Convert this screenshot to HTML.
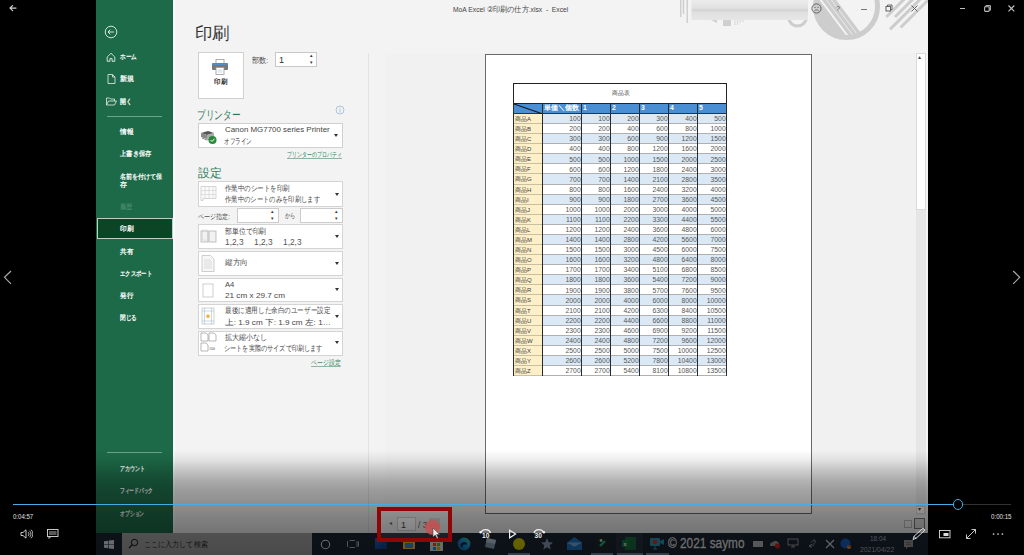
<!DOCTYPE html><html><head><meta charset="utf-8"><style>
*{margin:0;padding:0;box-sizing:border-box}
html,body{width:1024px;height:555px;overflow:hidden;background:#000}
body{position:relative;font-family:"Liberation Sans",sans-serif;color:#444}
.abs{position:absolute}
.t{position:absolute;white-space:nowrap;line-height:1}
.box{position:absolute;background:#fff;border:1px solid #d4d4d4}
.dd{position:absolute;width:0;height:0;border-left:2.5px solid transparent;border-right:2.5px solid transparent;border-top:3px solid #333}
.sp{position:absolute;font-size:5px;line-height:1;color:#333}
</style></head><body>
<div class="abs" style="left:96px;top:0;width:832px;height:533px;background:#f3f3f3"></div>
<div class="abs" style="left:385px;top:53px;width:531px;height:480px;background:#f1f1f1"></div>
<div class="abs" style="left:368px;top:53px;width:1px;height:480px;background:#e2e2e2"></div>
<div class="abs" style="left:96px;top:0;width:77px;height:533px;background:#1d6a48"></div>
<div class="abs" style="left:173px;top:0;width:1.5px;height:533px;background:#f9fbfb"></div>
<svg class="abs" style="left:104px;top:25px" width="14" height="14" viewBox="0 0 14 14"><circle cx="7" cy="7" r="5.8" fill="none" stroke="#e8efe9" stroke-width="0.9"/><path d="M4 7h6M6.3 4.7L4 7l2.3 2.3" fill="none" stroke="#e8efe9" stroke-width="0.9"/></svg>
<svg class="abs" style="left:106px;top:52px" width="10" height="10" viewBox="0 0 10 10"><path d="M1.2 5L5 1.3 8.8 5V9.3H6.1V6.6H3.9V9.3H1.2z" fill="none" stroke="#eef3ef" stroke-width="0.85" stroke-linejoin="round"/></svg>
<svg class="abs" style="left:107px;top:74px" width="9" height="10" viewBox="0 0 9 10"><path d="M1 .5h4.5L8 3v6.5H1z M5.5 .5V3H8" fill="none" stroke="#e8efe9" stroke-width="0.8"/></svg>
<svg class="abs" style="left:106px;top:97px" width="11" height="9" viewBox="0 0 11 9"><path d="M.5 8V1h3l1 1h4v2 M.5 8l2-4H10.5l-2 4z" fill="none" stroke="#e8efe9" stroke-width="0.8"/></svg>
<div class="abs" style="left:107px;top:116px;width:55px;height:1px;background:#6da587"></div>
<div class="abs" style="left:97px;top:218px;width:76px;height:21px;background:#0c4526;border:1px solid #b9d2c3"></div>
<div class="abs" style="left:107px;top:452px;width:55px;height:1px;background:#6da587"></div>
<div class="t" id="sb_home" style="left:119.6px;top:53.1px;font-size:7px;color:#ffffff;transform:scaleX(0.805);transform-origin:0 0;-webkit-text-stroke:0.25px #fff">ホーム</div>
<div class="t" id="sb_new" style="left:119.6px;top:75.2px;font-size:7px;color:#ffffff;-webkit-text-stroke:0.25px #fff">新規</div>
<div class="t" id="sb_open" style="left:119.6px;top:97.8px;font-size:7px;color:#ffffff;transform:scaleX(0.858);transform-origin:0 0;-webkit-text-stroke:0.25px #fff">開く</div>
<div class="t" id="sb_info" style="left:119.6px;top:128.4px;font-size:7px;color:#ffffff;transform:scaleX(0.957);transform-origin:0 0;-webkit-text-stroke:0.25px #fff">情報</div>
<div class="t" id="sb_save" style="left:120.0px;top:150.2px;font-size:7px;color:#ffffff;transform:scaleX(0.903);transform-origin:0 0;-webkit-text-stroke:0.25px #fff">上書き保存</div>
<div class="t" id="sb_saveas1" style="left:120.0px;top:172.5px;font-size:7px;color:#ffffff;transform:scaleX(0.863);transform-origin:0 0;-webkit-text-stroke:0.25px #fff">名前を付けて保</div>
<div class="t" id="sb_saveas2" style="left:120.0px;top:181.0px;font-size:7px;color:#ffffff;-webkit-text-stroke:0.25px #fff">存</div>
<div class="t" id="sb_hist" style="left:120.0px;top:202.6px;font-size:7px;color:#5e9779;transform:scaleX(0.893);transform-origin:0 0;">履歴</div>
<div class="t" id="sb_print" style="left:119.8px;top:225.3px;font-size:7px;color:#ffffff;transform:scaleX(0.957);transform-origin:0 0;-webkit-text-stroke:0.25px #fff">印刷</div>
<div class="t" id="sb_share" style="left:119.8px;top:247.5px;font-size:7px;color:#ffffff;transform:scaleX(0.929);transform-origin:0 0;-webkit-text-stroke:0.25px #fff">共有</div>
<div class="t" id="sb_export" style="left:119.8px;top:269.5px;font-size:7px;color:#ffffff;transform:scaleX(0.763);transform-origin:0 0;-webkit-text-stroke:0.25px #fff">エクスポート</div>
<div class="t" id="sb_publish" style="left:119.8px;top:291.5px;font-size:7px;color:#ffffff;transform:scaleX(0.929);transform-origin:0 0;-webkit-text-stroke:0.25px #fff">発行</div>
<div class="t" id="sb_close" style="left:119.8px;top:313.5px;font-size:7px;color:#ffffff;transform:scaleX(0.8);transform-origin:0 0;-webkit-text-stroke:0.25px #fff">閉じる</div>
<div class="t" id="sb_account" style="left:120.0px;top:464.8px;font-size:7px;color:#ffffff;transform:scaleX(0.715);transform-origin:0 0;-webkit-text-stroke:0.25px #fff">アカウント</div>
<div class="t" id="sb_feedback" style="left:120.0px;top:487.0px;font-size:7px;color:#ffffff;transform:scaleX(0.675);transform-origin:0 0;-webkit-text-stroke:0.25px #fff">フィードバック</div>
<div class="t" id="sb_options" style="left:120.0px;top:509.5px;font-size:7px;color:#ffffff;transform:scaleX(0.694);transform-origin:0 0;-webkit-text-stroke:0.25px #fff">オプション</div>
<div class="t" id="title" style="left:453.4px;top:6.0px;font-size:7.5px;color:#444;transform:scaleX(0.896);transform-origin:0 0;">MoA Excel ②印刷の仕方.xlsx&nbsp; - &nbsp;Excel</div>
<svg class="abs" style="left:676px;top:0" width="252" height="45" viewBox="676 0 252 45">
<defs><linearGradient id="bar" x1="0" y1="0" x2="0" y2="1"><stop offset="0" stop-color="#ececec"/><stop offset="0.4" stop-color="#e2e2e2"/><stop offset="0.5" stop-color="#d2d2d2"/><stop offset="0.62" stop-color="#e0e0e0"/><stop offset="1" stop-color="#e6e6e6"/></linearGradient>
<clipPath id="cl"><rect x="676" y="0" width="252" height="45"/></clipPath>
<clipPath id="inner"><circle cx="846.5" cy="6.5" r="29"/></clipPath></defs>
<g clip-path="url(#cl)" fill="none" stroke="#cdcdcd">
<path d="M680.8 0v17M683.5 0v14M687.2 0v23" stroke-width="1.4"/>
<circle cx="797.5" cy="17" r="9" stroke-width="3"/>
<circle cx="846.5" cy="6.5" r="31" stroke-width="5"/>
<g clip-path="url(#inner)" stroke-width="3.4"><path d="M821 -4l30 40M826 -4l30 40M831 -4l30 40"/><path d="M816.5 -4l30 40H790V-4z" fill="#cdcdcd" stroke="none"/></g>
<path d="M886.3 17l20-20M895 17l20-20M890 29.4l40-40M900.6 27.5l32-32" stroke-width="3"/>
</g>
<rect x="691.5" y="0" width="116.5" height="20" fill="url(#bar)"/>
<path d="M711 20l6 3v-3z" fill="#cfcfcf"/><rect x="723" y="20" width="8" height="6" fill="#cfcfcf"/>
<path d="M735 20v5M737.5 20v5M740 20v3M743 20v2" stroke="#cfcfcf" stroke-width="0.8"/>
</svg>
<svg class="abs" style="left:811px;top:3px" width="11" height="11" viewBox="0 0 11 11"><circle cx="5.5" cy="5.5" r="4.6" fill="none" stroke="#555" stroke-width="0.9"/><circle cx="4" cy="4.3" r="0.6" fill="#555"/><circle cx="7" cy="4.3" r="0.6" fill="#555"/><path d="M3.3 8c1.2-1.5 3.2-1.5 4.4 0" fill="none" stroke="#555" stroke-width="0.8"/></svg>
<div class="t" style="left:836px;top:5px;font-size:7px;color:#555">?</div>
<div class="abs" style="left:861px;top:8.5px;width:6px;height:0.8px;background:#777"></div>
<svg class="abs" style="left:885px;top:4px" width="8" height="8" viewBox="0 0 8 8"><rect x="1" y="2.5" width="4.5" height="4.5" fill="none" stroke="#555" stroke-width="0.9"/><path d="M2.5 2.5V1H7v4.5H5.5" fill="none" stroke="#555" stroke-width="0.9"/></svg>
<svg class="abs" style="left:911px;top:5px" width="7" height="7" viewBox="0 0 7 7"><path d="M.5 .5l6 6M6.5 .5l-6 6" stroke="#555" stroke-width="0.9"/></svg>
<div class="t" id="h_print" style="left:195.47px;top:24.9px;font-size:17px;color:#333;transform:scaleX(1.028);transform-origin:0 0;">印刷</div>
<div class="box" style="left:198px;top:52px;width:46px;height:47px;border-color:#d0d0d0"></div>
<svg class="abs" style="left:211px;top:59px" width="18" height="16" viewBox="0 0 18 16"><rect x="5" y="0.5" width="8" height="4" fill="#fff" stroke="#999" stroke-width="0.8"/><rect x="1" y="4" width="16" height="7" rx="1" fill="#777"/><rect x="2" y="4.5" width="14" height="1.5" fill="#4f8fce"/><rect x="5" y="8.5" width="8" height="7" fill="#fff" stroke="#999" stroke-width="0.8"/><path d="M6.5 11h5M6.5 13h5" stroke="#bbb" stroke-width="0.6"/></svg>
<div class="t" id="btn_print" style="left:214.0px;top:78.1px;font-size:7px;color:#333;transform:scaleX(0.929);transform-origin:0 0;font-weight:bold">印刷</div>
<div class="t" id="copies" style="left:252.4px;top:57.2px;font-size:7.5px;color:#484848;transform:scaleX(0.894);transform-origin:0 0;">部数:</div>
<div class="box" style="left:275px;top:52px;width:42px;height:15px;border-color:#c8c8c8"></div>
<div class="t" id="copies_v" style="left:279.0px;top:55.8px;font-size:9px;color:#333;">1</div>
<div class="sp" style="left:310px;top:53px">▴</div><div class="sp" style="left:310px;top:60px">▾</div>
<div class="t" id="h_printer" style="left:197.08px;top:108.5px;font-size:12px;color:#2f7a58;transform:scaleX(0.722);transform-origin:0 0;">プリンター</div>
<svg class="abs" style="left:335px;top:105px" width="10" height="10" viewBox="0 0 10 10"><circle cx="5" cy="5" r="4" fill="none" stroke="#9cb8d8" stroke-width="0.8"/><path d="M5 4v3.5M5 2.6v.8" stroke="#9cb8d8" stroke-width="0.8"/></svg>
<div class="box" style="left:198px;top:123px;width:145px;height:25px;border-color:#d0d0d0"></div>
<svg class="abs" style="left:199px;top:129px" width="20" height="16" viewBox="0 0 20 16"><path d="M2 4l7-2 6 2-7 2z" fill="#555"/><path d="M2 4v4l6 2V6z" fill="#888"/><path d="M8 6l7-2v4l-7 2z" fill="#aaa"/><path d="M3 9l5 2 5-1.5" stroke="#666" stroke-width="0.8" fill="none"/><circle cx="13.5" cy="11" r="4" fill="#2a8a3a"/><path d="M11.5 11l1.5 1.5 2.6-2.8" stroke="#fff" stroke-width="1" fill="none"/></svg>
<div class="t" id="prn_name" style="left:224.7px;top:126.2px;font-size:8px;color:#444;transform:scaleX(0.989);transform-origin:0 0;">Canon MG7700 series Printer</div>
<div class="t" id="prn_status" style="left:224.01px;top:137.9px;font-size:7.5px;color:#444;transform:scaleX(0.692);transform-origin:0 0;">オフライン</div>
<div class="dd" style="left:334px;top:134px"></div>
<div class="t" id="prn_prop" style="left:286.99px;top:152.0px;font-size:6.5px;color:#3d7a60;transform:scaleX(0.713);transform-origin:0 0;text-decoration:underline;text-decoration-color:#8fb3a0">プリンターのプロパティ</div>
<div class="t" id="h_settings" style="left:198.0px;top:167.0px;font-size:12px;color:#2f7a58;">設定</div>
<div class="box" style="left:198px;top:181px;width:145px;height:26px;border-color:#d4d4d4"></div>
<svg class="abs" style="left:200px;top:186px" width="17" height="15" viewBox="0 0 17 15"><path d="M1 .5h15v12H3v2H1z" fill="#fafafa" stroke="#c4c4c4" stroke-width="0.7"/><path d="M1 4.5h15M1 8.5h15M5 .5v12M9 .5v12M13 .5v12" stroke="#d0d0d0" stroke-width="0.6"/></svg>
<div class="t" id="s1a" style="left:224.8px;top:184.9px;font-size:7.5px;color:#484848;transform:scaleX(0.811);transform-origin:0 0;">作業中のシートを印刷</div>
<div class="t" id="s1b" style="left:224.8px;top:196.2px;font-size:7.5px;color:#484848;transform:scaleX(0.791);transform-origin:0 0;">作業中のシートのみを印刷します</div>
<div class="dd" style="left:334.5px;top:192.5px"></div>
<div class="t" id="pages" style="left:197.8px;top:212.5px;font-size:7px;color:#4a4a4a;transform:scaleX(0.862);transform-origin:0 0;">ページ指定:</div>
<div class="box" style="left:237px;top:208px;width:42px;height:15px;border-color:#ccc"></div>
<div class="sp" style="left:271px;top:209px">▴</div><div class="sp" style="left:271px;top:216px">▾</div>
<div class="t" id="kara" style="left:284.8px;top:212.0px;font-size:7px;color:#4a4a4a;transform:scaleX(0.746);transform-origin:0 0;">から</div>
<div class="box" style="left:300px;top:208px;width:43px;height:15px;border-color:#ccc"></div>
<div class="sp" style="left:335px;top:209px">▴</div><div class="sp" style="left:335px;top:216px">▾</div>
<div class="box" style="left:198px;top:224px;width:145px;height:25px;border-color:#d4d4d4"></div>
<svg class="abs" style="left:200px;top:229px" width="17" height="14" viewBox="0 0 17 14"><rect x="1" y="2" width="7" height="11" fill="#f2f2f2" stroke="#aaa" stroke-width="0.7"/><rect x="9" y="2" width="7" height="11" fill="#f2f2f2" stroke="#aaa" stroke-width="0.7"/><rect x="2.5" y="1" width="5" height="10" fill="none" stroke="#ccc" stroke-width="0.5"/></svg>
<div class="t" id="s2a" style="left:224.8px;top:227.8px;font-size:7.5px;color:#484848;transform:scaleX(0.862);transform-origin:0 0;">部単位で印刷</div>
<div class="t" id="s2b1" style="left:224.8px;top:238.2px;font-size:8.5px;color:#555;transform:scaleX(0.979);transform-origin:0 0;font-family:"Liberation Serif",serif">1,2,3</div>
<div class="t" id="s2b2" style="left:254.0px;top:238.2px;font-size:8.5px;color:#555;transform:scaleX(0.979);transform-origin:0 0;font-family:"Liberation Serif",serif">1,2,3</div>
<div class="t" id="s2b3" style="left:282.7px;top:238.2px;font-size:8.5px;color:#555;transform:scaleX(0.979);transform-origin:0 0;font-family:"Liberation Serif",serif">1,2,3</div>
<div class="dd" style="left:334.5px;top:235.0px"></div>
<div class="box" style="left:198px;top:251px;width:145px;height:25px;border-color:#d4d4d4"></div>
<svg class="abs" style="left:201px;top:255px" width="14" height="17" viewBox="0 0 14 17"><path d="M1 .5h8.5L13 4v12.5H1z" fill="#f6f6f6" stroke="#bbb" stroke-width="0.7"/><path d="M3 5h7M3 7h8M3 9h8M3 11h8M3 13h8" stroke="#ccc" stroke-width="0.6"/></svg>
<div class="t" id="s3" style="left:224.7px;top:258.9px;font-size:7.5px;color:#484848;transform:scaleX(0.957);transform-origin:0 0;">縦方向</div>
<div class="dd" style="left:334.5px;top:262.0px"></div>
<div class="box" style="left:198px;top:278px;width:145px;height:24px;border-color:#d4d4d4"></div>
<svg class="abs" style="left:202px;top:283px" width="12" height="15" viewBox="0 0 12 15"><rect x="1" y="1" width="10" height="13" fill="#fff" stroke="#bbb" stroke-width="0.7"/></svg>
<div class="t" id="s4a" style="left:225.1px;top:280.9px;font-size:7.5px;color:#484848;transform:scaleX(1.011);transform-origin:0 0;">A4</div>
<div class="t" id="s4b" style="left:225.1px;top:292.4px;font-size:7.5px;color:#484848;transform:scaleX(1.091);transform-origin:0 0;">21 cm x 29.7 cm</div>
<div class="dd" style="left:334.5px;top:288.0px"></div>
<div class="box" style="left:198px;top:304px;width:145px;height:25px;border-color:#d4d4d4"></div>
<svg class="abs" style="left:201px;top:307px" width="14" height="18" viewBox="0 0 14 18"><rect x="1" y="1" width="12" height="16" fill="#fff" stroke="#bbb" stroke-width="0.7"/><path d="M3.5 1v16M10.5 1v16M1 4h12M1 14h12" stroke="#9cc0dc" stroke-width="0.6"/><path d="M7 6.5l.8 1.7 1.8.2-1.3 1.2.4 1.8L7 10.5l-1.7.9.4-1.8-1.3-1.2 1.8-.2z" fill="#f0b040"/></svg>
<div class="t" id="s5a" style="left:225.1px;top:307.4px;font-size:7.5px;color:#484848;transform:scaleX(0.823);transform-origin:0 0;">最後に適用した余白のユーザー設定</div>
<div class="t" id="s5b" style="left:225.1px;top:318.7px;font-size:7.5px;color:#484848;transform:scaleX(1.087);transform-origin:0 0;">上: 1.9 cm 下: 1.9 cm 左: 1…</div>
<div class="dd" style="left:334.5px;top:314.5px"></div>
<div class="box" style="left:198px;top:331px;width:145px;height:25px;border-color:#d4d4d4"></div>
<svg class="abs" style="left:200px;top:332px" width="18" height="20" viewBox="0 0 18 20"><path d="M1 1h5l2 2v6H1z M9 1h5l2 2v6H9z M1 11h5l2 2v6H1z" fill="#fff" stroke="#999" stroke-width="0.7"/><text x="9" y="18" font-size="4" fill="#555" font-family="Liberation Serif">100</text></svg>
<div class="t" id="s6a" style="left:225.1px;top:333.5px;font-size:7.5px;color:#484848;transform:scaleX(0.87);transform-origin:0 0;">拡大縮小なし</div>
<div class="t" id="s6b" style="left:224.33px;top:345.0px;font-size:7.5px;color:#484848;transform:scaleX(0.769);transform-origin:0 0;">シートを実際のサイズで印刷します</div>
<div class="dd" style="left:334.5px;top:341.0px"></div>
<div class="t" id="pagesetup" style="left:311.3px;top:359.5px;font-size:6.5px;color:#3d7a60;transform:scaleX(0.849);transform-origin:0 0;text-decoration:underline;text-decoration-color:#8fb3a0">ページ設定</div>
<div class="abs" style="left:485px;top:54px;width:327px;height:460px;background:#fff;border:1px solid #6a6a6a"></div>
<div class="abs" style="left:512.8px;top:82.8px;width:214.4px;height:20px;background:#fff;border:1.3px solid #222;border-bottom:none"></div>
<div class="t" id="tbl_title" style="left:612.0px;top:90.2px;font-size:6px;color:#444;transform:scaleX(0.972);transform-origin:0 0;">商品表</div>
<div class="abs" style="left:513.5px;top:103px;width:213.0px;height:11px;background:#4a8fd3;border-top:1.3px solid #222;border-bottom:1px solid #333"></div>
<svg class="abs" style="left:513.5px;top:103px" width="29" height="11"><path d="M0 1L29 11" stroke="#111" stroke-width="1.1"/></svg>
<div class="t" style="left:544.0px;top:105.3px;font-size:6.8px;color:#fff;font-weight:bold">単価＼個数</div>
<div class="t" style="left:583.0px;top:105.3px;font-size:6.8px;color:#fff;font-weight:bold">1</div>
<div class="t" style="left:612.0px;top:105.3px;font-size:6.8px;color:#fff;font-weight:bold">2</div>
<div class="t" style="left:641.0px;top:105.3px;font-size:6.8px;color:#fff;font-weight:bold">3</div>
<div class="t" style="left:670.0px;top:105.3px;font-size:6.8px;color:#fff;font-weight:bold">4</div>
<div class="t" style="left:699.0px;top:105.3px;font-size:6.8px;color:#fff;font-weight:bold">5</div>
<div class="abs" style="left:513.5px;top:114.00px;width:29px;height:10.08px;background:#fdf0c8;border-bottom:1px solid #c9c0a0"></div>
<div class="abs" style="left:542.5px;top:114.00px;width:184px;height:10.08px;background:#dbe9f6;border-bottom:1px solid #b0b0b0"></div>
<div class="t" style="left:515px;top:116.00px;font-size:6px;color:#3a3a3a">商品A</div>
<div class="t" style="left:542.5px;width:38.2px;text-align:right;top:116.20px;font-size:6.8px;color:#555">100</div>
<div class="t" style="left:581.5px;width:28.2px;text-align:right;top:116.20px;font-size:6.8px;color:#555">100</div>
<div class="t" style="left:610.5px;width:28.2px;text-align:right;top:116.20px;font-size:6.8px;color:#555">200</div>
<div class="t" style="left:639.5px;width:28.2px;text-align:right;top:116.20px;font-size:6.8px;color:#555">300</div>
<div class="t" style="left:668.5px;width:28.2px;text-align:right;top:116.20px;font-size:6.8px;color:#555">400</div>
<div class="t" style="left:697.5px;width:28.2px;text-align:right;top:116.20px;font-size:6.8px;color:#555">500</div>
<div class="abs" style="left:513.5px;top:124.08px;width:29px;height:10.08px;background:#fdf0c8;border-bottom:1px solid #c9c0a0"></div>
<div class="abs" style="left:542.5px;top:124.08px;width:184px;height:10.08px;background:#ffffff;border-bottom:1px solid #b0b0b0"></div>
<div class="t" style="left:515px;top:126.08px;font-size:6px;color:#3a3a3a">商品B</div>
<div class="t" style="left:542.5px;width:38.2px;text-align:right;top:126.28px;font-size:6.8px;color:#555">200</div>
<div class="t" style="left:581.5px;width:28.2px;text-align:right;top:126.28px;font-size:6.8px;color:#555">200</div>
<div class="t" style="left:610.5px;width:28.2px;text-align:right;top:126.28px;font-size:6.8px;color:#555">400</div>
<div class="t" style="left:639.5px;width:28.2px;text-align:right;top:126.28px;font-size:6.8px;color:#555">600</div>
<div class="t" style="left:668.5px;width:28.2px;text-align:right;top:126.28px;font-size:6.8px;color:#555">800</div>
<div class="t" style="left:697.5px;width:28.2px;text-align:right;top:126.28px;font-size:6.8px;color:#555">1000</div>
<div class="abs" style="left:513.5px;top:134.16px;width:29px;height:10.08px;background:#fdf0c8;border-bottom:1px solid #c9c0a0"></div>
<div class="abs" style="left:542.5px;top:134.16px;width:184px;height:10.08px;background:#dbe9f6;border-bottom:1px solid #b0b0b0"></div>
<div class="t" style="left:515px;top:136.16px;font-size:6px;color:#3a3a3a">商品C</div>
<div class="t" style="left:542.5px;width:38.2px;text-align:right;top:136.36px;font-size:6.8px;color:#555">300</div>
<div class="t" style="left:581.5px;width:28.2px;text-align:right;top:136.36px;font-size:6.8px;color:#555">300</div>
<div class="t" style="left:610.5px;width:28.2px;text-align:right;top:136.36px;font-size:6.8px;color:#555">600</div>
<div class="t" style="left:639.5px;width:28.2px;text-align:right;top:136.36px;font-size:6.8px;color:#555">900</div>
<div class="t" style="left:668.5px;width:28.2px;text-align:right;top:136.36px;font-size:6.8px;color:#555">1200</div>
<div class="t" style="left:697.5px;width:28.2px;text-align:right;top:136.36px;font-size:6.8px;color:#555">1500</div>
<div class="abs" style="left:513.5px;top:144.24px;width:29px;height:10.08px;background:#fdf0c8;border-bottom:1px solid #c9c0a0"></div>
<div class="abs" style="left:542.5px;top:144.24px;width:184px;height:10.08px;background:#ffffff;border-bottom:1px solid #b0b0b0"></div>
<div class="t" style="left:515px;top:146.24px;font-size:6px;color:#3a3a3a">商品D</div>
<div class="t" style="left:542.5px;width:38.2px;text-align:right;top:146.44px;font-size:6.8px;color:#555">400</div>
<div class="t" style="left:581.5px;width:28.2px;text-align:right;top:146.44px;font-size:6.8px;color:#555">400</div>
<div class="t" style="left:610.5px;width:28.2px;text-align:right;top:146.44px;font-size:6.8px;color:#555">800</div>
<div class="t" style="left:639.5px;width:28.2px;text-align:right;top:146.44px;font-size:6.8px;color:#555">1200</div>
<div class="t" style="left:668.5px;width:28.2px;text-align:right;top:146.44px;font-size:6.8px;color:#555">1600</div>
<div class="t" style="left:697.5px;width:28.2px;text-align:right;top:146.44px;font-size:6.8px;color:#555">2000</div>
<div class="abs" style="left:513.5px;top:154.32px;width:29px;height:10.08px;background:#fdf0c8;border-bottom:1px solid #c9c0a0"></div>
<div class="abs" style="left:542.5px;top:154.32px;width:184px;height:10.08px;background:#dbe9f6;border-bottom:1px solid #b0b0b0"></div>
<div class="t" style="left:515px;top:156.32px;font-size:6px;color:#3a3a3a">商品E</div>
<div class="t" style="left:542.5px;width:38.2px;text-align:right;top:156.52px;font-size:6.8px;color:#555">500</div>
<div class="t" style="left:581.5px;width:28.2px;text-align:right;top:156.52px;font-size:6.8px;color:#555">500</div>
<div class="t" style="left:610.5px;width:28.2px;text-align:right;top:156.52px;font-size:6.8px;color:#555">1000</div>
<div class="t" style="left:639.5px;width:28.2px;text-align:right;top:156.52px;font-size:6.8px;color:#555">1500</div>
<div class="t" style="left:668.5px;width:28.2px;text-align:right;top:156.52px;font-size:6.8px;color:#555">2000</div>
<div class="t" style="left:697.5px;width:28.2px;text-align:right;top:156.52px;font-size:6.8px;color:#555">2500</div>
<div class="abs" style="left:513.5px;top:164.40px;width:29px;height:10.08px;background:#fdf0c8;border-bottom:1px solid #c9c0a0"></div>
<div class="abs" style="left:542.5px;top:164.40px;width:184px;height:10.08px;background:#ffffff;border-bottom:1px solid #b0b0b0"></div>
<div class="t" style="left:515px;top:166.40px;font-size:6px;color:#3a3a3a">商品F</div>
<div class="t" style="left:542.5px;width:38.2px;text-align:right;top:166.60px;font-size:6.8px;color:#555">600</div>
<div class="t" style="left:581.5px;width:28.2px;text-align:right;top:166.60px;font-size:6.8px;color:#555">600</div>
<div class="t" style="left:610.5px;width:28.2px;text-align:right;top:166.60px;font-size:6.8px;color:#555">1200</div>
<div class="t" style="left:639.5px;width:28.2px;text-align:right;top:166.60px;font-size:6.8px;color:#555">1800</div>
<div class="t" style="left:668.5px;width:28.2px;text-align:right;top:166.60px;font-size:6.8px;color:#555">2400</div>
<div class="t" style="left:697.5px;width:28.2px;text-align:right;top:166.60px;font-size:6.8px;color:#555">3000</div>
<div class="abs" style="left:513.5px;top:174.48px;width:29px;height:10.08px;background:#fdf0c8;border-bottom:1px solid #c9c0a0"></div>
<div class="abs" style="left:542.5px;top:174.48px;width:184px;height:10.08px;background:#dbe9f6;border-bottom:1px solid #b0b0b0"></div>
<div class="t" style="left:515px;top:176.48px;font-size:6px;color:#3a3a3a">商品G</div>
<div class="t" style="left:542.5px;width:38.2px;text-align:right;top:176.68px;font-size:6.8px;color:#555">700</div>
<div class="t" style="left:581.5px;width:28.2px;text-align:right;top:176.68px;font-size:6.8px;color:#555">700</div>
<div class="t" style="left:610.5px;width:28.2px;text-align:right;top:176.68px;font-size:6.8px;color:#555">1400</div>
<div class="t" style="left:639.5px;width:28.2px;text-align:right;top:176.68px;font-size:6.8px;color:#555">2100</div>
<div class="t" style="left:668.5px;width:28.2px;text-align:right;top:176.68px;font-size:6.8px;color:#555">2800</div>
<div class="t" style="left:697.5px;width:28.2px;text-align:right;top:176.68px;font-size:6.8px;color:#555">3500</div>
<div class="abs" style="left:513.5px;top:184.56px;width:29px;height:10.08px;background:#fdf0c8;border-bottom:1px solid #c9c0a0"></div>
<div class="abs" style="left:542.5px;top:184.56px;width:184px;height:10.08px;background:#ffffff;border-bottom:1px solid #b0b0b0"></div>
<div class="t" style="left:515px;top:186.56px;font-size:6px;color:#3a3a3a">商品H</div>
<div class="t" style="left:542.5px;width:38.2px;text-align:right;top:186.76px;font-size:6.8px;color:#555">800</div>
<div class="t" style="left:581.5px;width:28.2px;text-align:right;top:186.76px;font-size:6.8px;color:#555">800</div>
<div class="t" style="left:610.5px;width:28.2px;text-align:right;top:186.76px;font-size:6.8px;color:#555">1600</div>
<div class="t" style="left:639.5px;width:28.2px;text-align:right;top:186.76px;font-size:6.8px;color:#555">2400</div>
<div class="t" style="left:668.5px;width:28.2px;text-align:right;top:186.76px;font-size:6.8px;color:#555">3200</div>
<div class="t" style="left:697.5px;width:28.2px;text-align:right;top:186.76px;font-size:6.8px;color:#555">4000</div>
<div class="abs" style="left:513.5px;top:194.64px;width:29px;height:10.08px;background:#fdf0c8;border-bottom:1px solid #c9c0a0"></div>
<div class="abs" style="left:542.5px;top:194.64px;width:184px;height:10.08px;background:#dbe9f6;border-bottom:1px solid #b0b0b0"></div>
<div class="t" style="left:515px;top:196.64px;font-size:6px;color:#3a3a3a">商品I</div>
<div class="t" style="left:542.5px;width:38.2px;text-align:right;top:196.84px;font-size:6.8px;color:#555">900</div>
<div class="t" style="left:581.5px;width:28.2px;text-align:right;top:196.84px;font-size:6.8px;color:#555">900</div>
<div class="t" style="left:610.5px;width:28.2px;text-align:right;top:196.84px;font-size:6.8px;color:#555">1800</div>
<div class="t" style="left:639.5px;width:28.2px;text-align:right;top:196.84px;font-size:6.8px;color:#555">2700</div>
<div class="t" style="left:668.5px;width:28.2px;text-align:right;top:196.84px;font-size:6.8px;color:#555">3600</div>
<div class="t" style="left:697.5px;width:28.2px;text-align:right;top:196.84px;font-size:6.8px;color:#555">4500</div>
<div class="abs" style="left:513.5px;top:204.72px;width:29px;height:10.08px;background:#fdf0c8;border-bottom:1px solid #c9c0a0"></div>
<div class="abs" style="left:542.5px;top:204.72px;width:184px;height:10.08px;background:#ffffff;border-bottom:1px solid #b0b0b0"></div>
<div class="t" style="left:515px;top:206.72px;font-size:6px;color:#3a3a3a">商品J</div>
<div class="t" style="left:542.5px;width:38.2px;text-align:right;top:206.92px;font-size:6.8px;color:#555">1000</div>
<div class="t" style="left:581.5px;width:28.2px;text-align:right;top:206.92px;font-size:6.8px;color:#555">1000</div>
<div class="t" style="left:610.5px;width:28.2px;text-align:right;top:206.92px;font-size:6.8px;color:#555">2000</div>
<div class="t" style="left:639.5px;width:28.2px;text-align:right;top:206.92px;font-size:6.8px;color:#555">3000</div>
<div class="t" style="left:668.5px;width:28.2px;text-align:right;top:206.92px;font-size:6.8px;color:#555">4000</div>
<div class="t" style="left:697.5px;width:28.2px;text-align:right;top:206.92px;font-size:6.8px;color:#555">5000</div>
<div class="abs" style="left:513.5px;top:214.80px;width:29px;height:10.08px;background:#fdf0c8;border-bottom:1px solid #c9c0a0"></div>
<div class="abs" style="left:542.5px;top:214.80px;width:184px;height:10.08px;background:#dbe9f6;border-bottom:1px solid #b0b0b0"></div>
<div class="t" style="left:515px;top:216.80px;font-size:6px;color:#3a3a3a">商品K</div>
<div class="t" style="left:542.5px;width:38.2px;text-align:right;top:217.00px;font-size:6.8px;color:#555">1100</div>
<div class="t" style="left:581.5px;width:28.2px;text-align:right;top:217.00px;font-size:6.8px;color:#555">1100</div>
<div class="t" style="left:610.5px;width:28.2px;text-align:right;top:217.00px;font-size:6.8px;color:#555">2200</div>
<div class="t" style="left:639.5px;width:28.2px;text-align:right;top:217.00px;font-size:6.8px;color:#555">3300</div>
<div class="t" style="left:668.5px;width:28.2px;text-align:right;top:217.00px;font-size:6.8px;color:#555">4400</div>
<div class="t" style="left:697.5px;width:28.2px;text-align:right;top:217.00px;font-size:6.8px;color:#555">5500</div>
<div class="abs" style="left:513.5px;top:224.88px;width:29px;height:10.08px;background:#fdf0c8;border-bottom:1px solid #c9c0a0"></div>
<div class="abs" style="left:542.5px;top:224.88px;width:184px;height:10.08px;background:#ffffff;border-bottom:1px solid #b0b0b0"></div>
<div class="t" style="left:515px;top:226.88px;font-size:6px;color:#3a3a3a">商品L</div>
<div class="t" style="left:542.5px;width:38.2px;text-align:right;top:227.08px;font-size:6.8px;color:#555">1200</div>
<div class="t" style="left:581.5px;width:28.2px;text-align:right;top:227.08px;font-size:6.8px;color:#555">1200</div>
<div class="t" style="left:610.5px;width:28.2px;text-align:right;top:227.08px;font-size:6.8px;color:#555">2400</div>
<div class="t" style="left:639.5px;width:28.2px;text-align:right;top:227.08px;font-size:6.8px;color:#555">3600</div>
<div class="t" style="left:668.5px;width:28.2px;text-align:right;top:227.08px;font-size:6.8px;color:#555">4800</div>
<div class="t" style="left:697.5px;width:28.2px;text-align:right;top:227.08px;font-size:6.8px;color:#555">6000</div>
<div class="abs" style="left:513.5px;top:234.96px;width:29px;height:10.08px;background:#fdf0c8;border-bottom:1px solid #c9c0a0"></div>
<div class="abs" style="left:542.5px;top:234.96px;width:184px;height:10.08px;background:#dbe9f6;border-bottom:1px solid #b0b0b0"></div>
<div class="t" style="left:515px;top:236.96px;font-size:6px;color:#3a3a3a">商品M</div>
<div class="t" style="left:542.5px;width:38.2px;text-align:right;top:237.16px;font-size:6.8px;color:#555">1400</div>
<div class="t" style="left:581.5px;width:28.2px;text-align:right;top:237.16px;font-size:6.8px;color:#555">1400</div>
<div class="t" style="left:610.5px;width:28.2px;text-align:right;top:237.16px;font-size:6.8px;color:#555">2800</div>
<div class="t" style="left:639.5px;width:28.2px;text-align:right;top:237.16px;font-size:6.8px;color:#555">4200</div>
<div class="t" style="left:668.5px;width:28.2px;text-align:right;top:237.16px;font-size:6.8px;color:#555">5600</div>
<div class="t" style="left:697.5px;width:28.2px;text-align:right;top:237.16px;font-size:6.8px;color:#555">7000</div>
<div class="abs" style="left:513.5px;top:245.04px;width:29px;height:10.08px;background:#fdf0c8;border-bottom:1px solid #c9c0a0"></div>
<div class="abs" style="left:542.5px;top:245.04px;width:184px;height:10.08px;background:#ffffff;border-bottom:1px solid #b0b0b0"></div>
<div class="t" style="left:515px;top:247.04px;font-size:6px;color:#3a3a3a">商品N</div>
<div class="t" style="left:542.5px;width:38.2px;text-align:right;top:247.24px;font-size:6.8px;color:#555">1500</div>
<div class="t" style="left:581.5px;width:28.2px;text-align:right;top:247.24px;font-size:6.8px;color:#555">1500</div>
<div class="t" style="left:610.5px;width:28.2px;text-align:right;top:247.24px;font-size:6.8px;color:#555">3000</div>
<div class="t" style="left:639.5px;width:28.2px;text-align:right;top:247.24px;font-size:6.8px;color:#555">4500</div>
<div class="t" style="left:668.5px;width:28.2px;text-align:right;top:247.24px;font-size:6.8px;color:#555">6000</div>
<div class="t" style="left:697.5px;width:28.2px;text-align:right;top:247.24px;font-size:6.8px;color:#555">7500</div>
<div class="abs" style="left:513.5px;top:255.12px;width:29px;height:10.08px;background:#fdf0c8;border-bottom:1px solid #c9c0a0"></div>
<div class="abs" style="left:542.5px;top:255.12px;width:184px;height:10.08px;background:#dbe9f6;border-bottom:1px solid #b0b0b0"></div>
<div class="t" style="left:515px;top:257.12px;font-size:6px;color:#3a3a3a">商品O</div>
<div class="t" style="left:542.5px;width:38.2px;text-align:right;top:257.32px;font-size:6.8px;color:#555">1600</div>
<div class="t" style="left:581.5px;width:28.2px;text-align:right;top:257.32px;font-size:6.8px;color:#555">1600</div>
<div class="t" style="left:610.5px;width:28.2px;text-align:right;top:257.32px;font-size:6.8px;color:#555">3200</div>
<div class="t" style="left:639.5px;width:28.2px;text-align:right;top:257.32px;font-size:6.8px;color:#555">4800</div>
<div class="t" style="left:668.5px;width:28.2px;text-align:right;top:257.32px;font-size:6.8px;color:#555">6400</div>
<div class="t" style="left:697.5px;width:28.2px;text-align:right;top:257.32px;font-size:6.8px;color:#555">8000</div>
<div class="abs" style="left:513.5px;top:265.20px;width:29px;height:10.08px;background:#fdf0c8;border-bottom:1px solid #c9c0a0"></div>
<div class="abs" style="left:542.5px;top:265.20px;width:184px;height:10.08px;background:#ffffff;border-bottom:1px solid #b0b0b0"></div>
<div class="t" style="left:515px;top:267.20px;font-size:6px;color:#3a3a3a">商品P</div>
<div class="t" style="left:542.5px;width:38.2px;text-align:right;top:267.40px;font-size:6.8px;color:#555">1700</div>
<div class="t" style="left:581.5px;width:28.2px;text-align:right;top:267.40px;font-size:6.8px;color:#555">1700</div>
<div class="t" style="left:610.5px;width:28.2px;text-align:right;top:267.40px;font-size:6.8px;color:#555">3400</div>
<div class="t" style="left:639.5px;width:28.2px;text-align:right;top:267.40px;font-size:6.8px;color:#555">5100</div>
<div class="t" style="left:668.5px;width:28.2px;text-align:right;top:267.40px;font-size:6.8px;color:#555">6800</div>
<div class="t" style="left:697.5px;width:28.2px;text-align:right;top:267.40px;font-size:6.8px;color:#555">8500</div>
<div class="abs" style="left:513.5px;top:275.28px;width:29px;height:10.08px;background:#fdf0c8;border-bottom:1px solid #c9c0a0"></div>
<div class="abs" style="left:542.5px;top:275.28px;width:184px;height:10.08px;background:#dbe9f6;border-bottom:1px solid #b0b0b0"></div>
<div class="t" style="left:515px;top:277.28px;font-size:6px;color:#3a3a3a">商品Q</div>
<div class="t" style="left:542.5px;width:38.2px;text-align:right;top:277.48px;font-size:6.8px;color:#555">1800</div>
<div class="t" style="left:581.5px;width:28.2px;text-align:right;top:277.48px;font-size:6.8px;color:#555">1800</div>
<div class="t" style="left:610.5px;width:28.2px;text-align:right;top:277.48px;font-size:6.8px;color:#555">3600</div>
<div class="t" style="left:639.5px;width:28.2px;text-align:right;top:277.48px;font-size:6.8px;color:#555">5400</div>
<div class="t" style="left:668.5px;width:28.2px;text-align:right;top:277.48px;font-size:6.8px;color:#555">7200</div>
<div class="t" style="left:697.5px;width:28.2px;text-align:right;top:277.48px;font-size:6.8px;color:#555">9000</div>
<div class="abs" style="left:513.5px;top:285.36px;width:29px;height:10.08px;background:#fdf0c8;border-bottom:1px solid #c9c0a0"></div>
<div class="abs" style="left:542.5px;top:285.36px;width:184px;height:10.08px;background:#ffffff;border-bottom:1px solid #b0b0b0"></div>
<div class="t" style="left:515px;top:287.36px;font-size:6px;color:#3a3a3a">商品R</div>
<div class="t" style="left:542.5px;width:38.2px;text-align:right;top:287.56px;font-size:6.8px;color:#555">1900</div>
<div class="t" style="left:581.5px;width:28.2px;text-align:right;top:287.56px;font-size:6.8px;color:#555">1900</div>
<div class="t" style="left:610.5px;width:28.2px;text-align:right;top:287.56px;font-size:6.8px;color:#555">3800</div>
<div class="t" style="left:639.5px;width:28.2px;text-align:right;top:287.56px;font-size:6.8px;color:#555">5700</div>
<div class="t" style="left:668.5px;width:28.2px;text-align:right;top:287.56px;font-size:6.8px;color:#555">7600</div>
<div class="t" style="left:697.5px;width:28.2px;text-align:right;top:287.56px;font-size:6.8px;color:#555">9500</div>
<div class="abs" style="left:513.5px;top:295.44px;width:29px;height:10.08px;background:#fdf0c8;border-bottom:1px solid #c9c0a0"></div>
<div class="abs" style="left:542.5px;top:295.44px;width:184px;height:10.08px;background:#dbe9f6;border-bottom:1px solid #b0b0b0"></div>
<div class="t" style="left:515px;top:297.44px;font-size:6px;color:#3a3a3a">商品S</div>
<div class="t" style="left:542.5px;width:38.2px;text-align:right;top:297.64px;font-size:6.8px;color:#555">2000</div>
<div class="t" style="left:581.5px;width:28.2px;text-align:right;top:297.64px;font-size:6.8px;color:#555">2000</div>
<div class="t" style="left:610.5px;width:28.2px;text-align:right;top:297.64px;font-size:6.8px;color:#555">4000</div>
<div class="t" style="left:639.5px;width:28.2px;text-align:right;top:297.64px;font-size:6.8px;color:#555">6000</div>
<div class="t" style="left:668.5px;width:28.2px;text-align:right;top:297.64px;font-size:6.8px;color:#555">8000</div>
<div class="t" style="left:697.5px;width:28.2px;text-align:right;top:297.64px;font-size:6.8px;color:#555">10000</div>
<div class="abs" style="left:513.5px;top:305.52px;width:29px;height:10.08px;background:#fdf0c8;border-bottom:1px solid #c9c0a0"></div>
<div class="abs" style="left:542.5px;top:305.52px;width:184px;height:10.08px;background:#ffffff;border-bottom:1px solid #b0b0b0"></div>
<div class="t" style="left:515px;top:307.52px;font-size:6px;color:#3a3a3a">商品T</div>
<div class="t" style="left:542.5px;width:38.2px;text-align:right;top:307.72px;font-size:6.8px;color:#555">2100</div>
<div class="t" style="left:581.5px;width:28.2px;text-align:right;top:307.72px;font-size:6.8px;color:#555">2100</div>
<div class="t" style="left:610.5px;width:28.2px;text-align:right;top:307.72px;font-size:6.8px;color:#555">4200</div>
<div class="t" style="left:639.5px;width:28.2px;text-align:right;top:307.72px;font-size:6.8px;color:#555">6300</div>
<div class="t" style="left:668.5px;width:28.2px;text-align:right;top:307.72px;font-size:6.8px;color:#555">8400</div>
<div class="t" style="left:697.5px;width:28.2px;text-align:right;top:307.72px;font-size:6.8px;color:#555">10500</div>
<div class="abs" style="left:513.5px;top:315.60px;width:29px;height:10.08px;background:#fdf0c8;border-bottom:1px solid #c9c0a0"></div>
<div class="abs" style="left:542.5px;top:315.60px;width:184px;height:10.08px;background:#dbe9f6;border-bottom:1px solid #b0b0b0"></div>
<div class="t" style="left:515px;top:317.60px;font-size:6px;color:#3a3a3a">商品U</div>
<div class="t" style="left:542.5px;width:38.2px;text-align:right;top:317.80px;font-size:6.8px;color:#555">2200</div>
<div class="t" style="left:581.5px;width:28.2px;text-align:right;top:317.80px;font-size:6.8px;color:#555">2200</div>
<div class="t" style="left:610.5px;width:28.2px;text-align:right;top:317.80px;font-size:6.8px;color:#555">4400</div>
<div class="t" style="left:639.5px;width:28.2px;text-align:right;top:317.80px;font-size:6.8px;color:#555">6600</div>
<div class="t" style="left:668.5px;width:28.2px;text-align:right;top:317.80px;font-size:6.8px;color:#555">8800</div>
<div class="t" style="left:697.5px;width:28.2px;text-align:right;top:317.80px;font-size:6.8px;color:#555">11000</div>
<div class="abs" style="left:513.5px;top:325.68px;width:29px;height:10.08px;background:#fdf0c8;border-bottom:1px solid #c9c0a0"></div>
<div class="abs" style="left:542.5px;top:325.68px;width:184px;height:10.08px;background:#ffffff;border-bottom:1px solid #b0b0b0"></div>
<div class="t" style="left:515px;top:327.68px;font-size:6px;color:#3a3a3a">商品V</div>
<div class="t" style="left:542.5px;width:38.2px;text-align:right;top:327.88px;font-size:6.8px;color:#555">2300</div>
<div class="t" style="left:581.5px;width:28.2px;text-align:right;top:327.88px;font-size:6.8px;color:#555">2300</div>
<div class="t" style="left:610.5px;width:28.2px;text-align:right;top:327.88px;font-size:6.8px;color:#555">4600</div>
<div class="t" style="left:639.5px;width:28.2px;text-align:right;top:327.88px;font-size:6.8px;color:#555">6900</div>
<div class="t" style="left:668.5px;width:28.2px;text-align:right;top:327.88px;font-size:6.8px;color:#555">9200</div>
<div class="t" style="left:697.5px;width:28.2px;text-align:right;top:327.88px;font-size:6.8px;color:#555">11500</div>
<div class="abs" style="left:513.5px;top:335.76px;width:29px;height:10.08px;background:#fdf0c8;border-bottom:1px solid #c9c0a0"></div>
<div class="abs" style="left:542.5px;top:335.76px;width:184px;height:10.08px;background:#dbe9f6;border-bottom:1px solid #b0b0b0"></div>
<div class="t" style="left:515px;top:337.76px;font-size:6px;color:#3a3a3a">商品W</div>
<div class="t" style="left:542.5px;width:38.2px;text-align:right;top:337.96px;font-size:6.8px;color:#555">2400</div>
<div class="t" style="left:581.5px;width:28.2px;text-align:right;top:337.96px;font-size:6.8px;color:#555">2400</div>
<div class="t" style="left:610.5px;width:28.2px;text-align:right;top:337.96px;font-size:6.8px;color:#555">4800</div>
<div class="t" style="left:639.5px;width:28.2px;text-align:right;top:337.96px;font-size:6.8px;color:#555">7200</div>
<div class="t" style="left:668.5px;width:28.2px;text-align:right;top:337.96px;font-size:6.8px;color:#555">9600</div>
<div class="t" style="left:697.5px;width:28.2px;text-align:right;top:337.96px;font-size:6.8px;color:#555">12000</div>
<div class="abs" style="left:513.5px;top:345.84px;width:29px;height:10.08px;background:#fdf0c8;border-bottom:1px solid #c9c0a0"></div>
<div class="abs" style="left:542.5px;top:345.84px;width:184px;height:10.08px;background:#ffffff;border-bottom:1px solid #b0b0b0"></div>
<div class="t" style="left:515px;top:347.84px;font-size:6px;color:#3a3a3a">商品X</div>
<div class="t" style="left:542.5px;width:38.2px;text-align:right;top:348.04px;font-size:6.8px;color:#555">2500</div>
<div class="t" style="left:581.5px;width:28.2px;text-align:right;top:348.04px;font-size:6.8px;color:#555">2500</div>
<div class="t" style="left:610.5px;width:28.2px;text-align:right;top:348.04px;font-size:6.8px;color:#555">5000</div>
<div class="t" style="left:639.5px;width:28.2px;text-align:right;top:348.04px;font-size:6.8px;color:#555">7500</div>
<div class="t" style="left:668.5px;width:28.2px;text-align:right;top:348.04px;font-size:6.8px;color:#555">10000</div>
<div class="t" style="left:697.5px;width:28.2px;text-align:right;top:348.04px;font-size:6.8px;color:#555">12500</div>
<div class="abs" style="left:513.5px;top:355.92px;width:29px;height:10.08px;background:#fdf0c8;border-bottom:1px solid #c9c0a0"></div>
<div class="abs" style="left:542.5px;top:355.92px;width:184px;height:10.08px;background:#dbe9f6;border-bottom:1px solid #b0b0b0"></div>
<div class="t" style="left:515px;top:357.92px;font-size:6px;color:#3a3a3a">商品Y</div>
<div class="t" style="left:542.5px;width:38.2px;text-align:right;top:358.12px;font-size:6.8px;color:#555">2600</div>
<div class="t" style="left:581.5px;width:28.2px;text-align:right;top:358.12px;font-size:6.8px;color:#555">2600</div>
<div class="t" style="left:610.5px;width:28.2px;text-align:right;top:358.12px;font-size:6.8px;color:#555">5200</div>
<div class="t" style="left:639.5px;width:28.2px;text-align:right;top:358.12px;font-size:6.8px;color:#555">7800</div>
<div class="t" style="left:668.5px;width:28.2px;text-align:right;top:358.12px;font-size:6.8px;color:#555">10400</div>
<div class="t" style="left:697.5px;width:28.2px;text-align:right;top:358.12px;font-size:6.8px;color:#555">13000</div>
<div class="abs" style="left:513.5px;top:366.00px;width:29px;height:10.08px;background:#fdf0c8;border-bottom:1px solid #c9c0a0"></div>
<div class="abs" style="left:542.5px;top:366.00px;width:184px;height:10.08px;background:#ffffff;border-bottom:1px solid #b0b0b0"></div>
<div class="t" style="left:515px;top:368.00px;font-size:6px;color:#3a3a3a">商品Z</div>
<div class="t" style="left:542.5px;width:38.2px;text-align:right;top:368.20px;font-size:6.8px;color:#555">2700</div>
<div class="t" style="left:581.5px;width:28.2px;text-align:right;top:368.20px;font-size:6.8px;color:#555">2700</div>
<div class="t" style="left:610.5px;width:28.2px;text-align:right;top:368.20px;font-size:6.8px;color:#555">5400</div>
<div class="t" style="left:639.5px;width:28.2px;text-align:right;top:368.20px;font-size:6.8px;color:#555">8100</div>
<div class="t" style="left:668.5px;width:28.2px;text-align:right;top:368.20px;font-size:6.8px;color:#555">10800</div>
<div class="t" style="left:697.5px;width:28.2px;text-align:right;top:368.20px;font-size:6.8px;color:#555">13500</div>
<div class="abs" style="left:513.0px;top:103px;width:1.4px;height:273px;background:#2a2a2a"></div>
<div class="abs" style="left:542.0px;top:103px;width:1.4px;height:273px;background:#2a2a2a"></div>
<div class="abs" style="left:581.0px;top:103px;width:1px;height:273px;background:#2a2a2a"></div>
<div class="abs" style="left:610.0px;top:103px;width:1px;height:273px;background:#2a2a2a"></div>
<div class="abs" style="left:639.0px;top:103px;width:1px;height:273px;background:#2a2a2a"></div>
<div class="abs" style="left:668.0px;top:103px;width:1px;height:273px;background:#2a2a2a"></div>
<div class="abs" style="left:697.0px;top:103px;width:1px;height:273px;background:#2a2a2a"></div>
<div class="abs" style="left:726.0px;top:103px;width:1.4px;height:273px;background:#2a2a2a"></div>
<div class="abs" style="left:916px;top:53px;width:10px;height:462px;background:#e6e6e6"></div>
<div class="abs" style="left:916px;top:53px;width:10px;height:157px;background:#fff;border:1px solid #dadada"></div>
<div class="t" style="left:918px;top:54px;font-size:6px;color:#444">▴</div>
<div class="abs" style="left:916px;top:506px;width:9px;height:8px;background:#fff;border:1px solid #dadada"></div>
<div class="t" style="left:918px;top:506px;font-size:6px;color:#444">▾</div>
<div class="t" style="left:389px;top:520px;font-size:6px;color:#555">◂</div>
<div class="box" style="left:397px;top:517px;width:19px;height:14px;border-color:#ccc"></div>
<div class="t" id="nav_1" style="left:401.0px;top:520.5px;font-size:9px;color:#2a2a2a;">1</div>
<div class="t" id="nav_of" style="left:418.0px;top:521.0px;font-size:9px;color:#4a4a4a;transform:scaleX(0.95);transform-origin:0 0;">/ 3</div>
<div class="abs" style="left:429px;top:518px;width:11px;height:11px;background:#d8d8d8"></div>
<div class="abs" style="left:904px;top:520px;width:8px;height:8px;border:1px solid #bbb"></div>
<div class="abs" style="left:914px;top:518px;width:11px;height:11px;border:1px solid #777;background:#ddd"></div>
<div class="abs" style="left:96px;top:533px;width:832px;height:22px;background:#1b2533"></div>
<svg class="abs" style="left:104px;top:540px" width="10" height="9" viewBox="0 0 10 9"><path d="M0 1.3L4.2.7V4.2H0zM4.8.6L10 0V4.2H4.8zM0 4.8h4.2v3.5L0 7.7zM4.8 4.8H10V9L4.8 8.4z" fill="#dfe6ee"/></svg>
<div class="abs" style="left:122px;top:533px;width:190px;height:22px;background:#a8a8a8"></div>
<svg class="abs" style="left:128px;top:538px" width="11" height="11" viewBox="0 0 11 11"><circle cx="6.5" cy="4.5" r="3.2" fill="none" stroke="#111" stroke-width="1"/><path d="M4.2 6.8L1 10" stroke="#111" stroke-width="1.1"/></svg>
<div class="t" id="search" style="left:143.52px;top:541.2px;font-size:8px;color:#2a2a2a;transform:scaleX(0.885);transform-origin:0 0;">ここに入力して検索</div>
<svg class="abs" style="left:320px;top:539px" width="11" height="11" viewBox="0 0 11 11"><circle cx="5.5" cy="5.5" r="4.2" fill="none" stroke="#e8e8e8" stroke-width="1.1"/></svg>
<svg class="abs" style="left:346px;top:539px" width="13" height="10" viewBox="0 0 13 10"><path d="M3.5 1.5h5.5M3.5 8.5h5.5M1.5 2v6M11 2v6M12.5 2.5v5" fill="none" stroke="#d8d8d8" stroke-width="0.8"/></svg>
<div class="abs" style="left:375px;top:538px;width:12px;height:11px;background:linear-gradient(135deg,#1d63c8,#0b3f8e)"></div>
<div class="abs" style="left:403px;top:541px;width:12px;height:8px;background:#f5c33b"></div><div class="abs" style="left:405px;top:543px;width:8px;height:5px;background:#3a8ee6"></div>
<div class="abs" style="left:430px;top:540px;width:13px;height:11px;background:#e8e8e8"></div><div class="abs" style="left:433px;top:543px;width:3px;height:3px;background:#f25022"></div><div class="abs" style="left:437px;top:543px;width:3px;height:3px;background:#7fba00"></div><div class="abs" style="left:433px;top:547px;width:3px;height:3px;background:#00a4ef"></div><div class="abs" style="left:437px;top:547px;width:3px;height:3px;background:#ffb900"></div>
<svg class="abs" style="left:457px;top:536.5px" width="14" height="14" viewBox="0 0 14 14"><defs><linearGradient id="edg" x1="0" y1="1" x2="1" y2="0"><stop offset="0" stop-color="#0c59a4"/><stop offset="0.6" stop-color="#1b9de2"/><stop offset="1" stop-color="#4cd27a"/></linearGradient></defs><circle cx="7" cy="7" r="6.4" fill="url(#edg)"/><path d="M4 9.5a3.3 3.3 0 0 1 6.3-2H6.5a2 2 0 0 0 0 3.3" fill="#0b1a2a" opacity="0.9"/></svg>
<svg class="abs" style="left:484px;top:536px" width="14" height="14" viewBox="0 0 14 14"><path d="M3 2l9 2-2 9-9-2z" fill="#8aa4b8"/><path d="M3 2l9 2-1 4-9-2z" fill="#b9cfdd"/></svg>
<div class="abs" style="left:512.8px;top:537.6px;width:12.2px;height:12.2px;border-radius:50%;background:#d8d200"></div>
<svg class="abs" style="left:540px;top:537px" width="14" height="14" viewBox="0 0 14 14"><path d="M7 1l1.7 4.2 4.3.3-3.3 2.8 1 4.2L7 10.2 3.3 12.5l1-4.2L1 5.5l4.3-.3z" fill="#8d9fbd"/></svg>
<svg class="abs" style="left:567px;top:537px" width="15" height="13" viewBox="0 0 15 13"><path d="M0 5.5L7.5 0 15 5.5V13H0z" fill="#1e78c8"/><path d="M0 5.5l7.5 4.2L15 5.5" fill="#7ab3e6"/></svg>
<div class="abs" style="left:596px;top:537px;width:13px;height:13px;background:#1f2a26"></div><svg class="abs" style="left:598px;top:538px" width="9" height="10" viewBox="0 0 9 10"><path d="M2 8l5-5" stroke="#20b59a" stroke-width="2.4"/><circle cx="3" cy="2.5" r="1.4" fill="#c7d7d0"/></svg>
<div class="abs" style="left:616px;top:533px;width:27px;height:22px;background:#26303d"></div>
<svg class="abs" style="left:622px;top:537px" width="14" height="13" viewBox="0 0 14 13"><rect x="3" y="0" width="11" height="13" rx="1" fill="#1a6c3e"/><rect x="0" y="3" width="7" height="7" fill="#107c41"/><text x="1.5" y="8.8" font-size="5.5" fill="#fff" font-family="Liberation Sans" font-weight="bold">x</text></svg>
<svg class="abs" style="left:650px;top:537px" width="14" height="13" viewBox="0 0 14 13"><rect x="0" y="1" width="10" height="8" rx="1" fill="#2a9ab8"/><path d="M10 4l4-2v6l-4-2z" fill="#2a9ab8"/><circle cx="5" cy="5" r="2.3" fill="#e03030"/><path d="M5 9v3M3 12h4" stroke="#2a9ab8" stroke-width="1"/></svg>
<div class="abs" style="left:508px;top:553px;width:22px;height:2px;background:#7a8aa0"></div>
<div class="abs" style="left:591px;top:553px;width:22px;height:2px;background:#7a8aa0"></div>
<div class="abs" style="left:617px;top:553px;width:26px;height:2px;background:#7a8aa0"></div>
<div class="abs" style="left:646px;top:553px;width:23px;height:2px;background:#7a8aa0"></div>
<div class="abs" style="left:753px;top:541px;width:10px;height:6px;background:#bbb"></div>
<svg class="abs" style="left:769px;top:538px" width="12" height="11" viewBox="0 0 12 11"><path d="M1 7a3 3 0 0 1 3-3 3.5 3.5 0 0 1 6 1.5V8H1z" fill="#999"/><circle cx="8.5" cy="8" r="2.6" fill="#d02020"/></svg>
<svg class="abs" style="left:787px;top:538px" width="12" height="10" viewBox="0 0 12 10"><rect x="1" y="1" width="10" height="6" fill="none" stroke="#aaa" stroke-width="0.9"/><path d="M4 9h4M6 7v2" stroke="#aaa" stroke-width="0.9"/></svg>
<svg class="abs" style="left:807px;top:538px" width="11" height="11" viewBox="0 0 11 11"><path d="M2 9l3-3M4 4.5l2-2a1.4 1.4 0 0 1 2 2l-2 2M7 6.5l-2 2a1.4 1.4 0 0 1-2-2" fill="none" stroke="#aaa" stroke-width="0.9"/></svg>
<svg class="abs" style="left:825px;top:539px" width="10" height="10" viewBox="0 0 10 10"><path d="M1 1l8 8M9 1L1 9" stroke="#ddd" stroke-width="1.1"/></svg>
<svg class="abs" style="left:840px;top:538px" width="12" height="12" viewBox="0 0 12 12"><circle cx="5.5" cy="5.5" r="5" fill="#1a5fc4"/><circle cx="9" cy="9" r="2" fill="#e0a020"/><circle cx="9.5" cy="8" r="1" fill="#d03030"/></svg>
<div class="t" id="clock1" style="left:869.5px;top:535.2px;font-size:7px;color:#aeb4bd;transform:scaleX(0.918);transform-origin:0 0;">18:04</div>
<div class="t" id="clock2" style="left:860.2px;top:545.8px;font-size:7px;color:#aeb4bd;transform:scaleX(0.977);transform-origin:0 0;">2021/04/22</div>
<svg class="abs" style="left:903px;top:539px" width="11" height="11" viewBox="0 0 11 11"><path d="M1 1h9v7H5l-2 2V8H1z" fill="#999"/><path d="M3 3.5h5M3 5.5h5" stroke="#666" stroke-width="0.7"/></svg>
<div class="abs" style="left:96px;top:450px;width:832px;height:105px;background:linear-gradient(to bottom,rgba(0,0,0,0) 0px,rgba(0,0,0,0.07) 10px,rgba(0,0,0,0.19) 20px,rgba(0,0,0,0.29) 30px,rgba(0,0,0,0.36) 40px,rgba(0,0,0,0.40) 50px,rgba(0,0,0,0.44) 60px,rgba(0,0,0,0.48) 70px,rgba(0,0,0,0.52) 83px,rgba(0,0,0,0.56) 105px)"></div>
<div class="t" id="watermark" style="left:667.5px;top:536.1px;font-size:14px;color:#6e6e6e;transform:scaleX(0.846);transform-origin:0 0;-webkit-text-stroke:0.35px #6e6e6e">© 2021 saymo</div>
<div class="abs" style="left:376.5px;top:506.5px;width:75.5px;height:35.5px;border:4.3px solid #8e0606;background:rgba(255,255,255,0.06)"></div>
<div class="abs" style="left:425px;top:519.5px;width:15px;height:15px;border-radius:50%;background:rgba(200,80,80,0.85)"></div>
<svg class="abs" style="left:432px;top:527px" width="8" height="12" viewBox="0 0 8 12"><path d="M1 1v9l2.3-2 1.6 3.4 1.3-.6-1.6-3.3h3z" fill="#eee" stroke="#444" stroke-width="0.6"/></svg>
<svg class="abs" style="left:0;top:0" width="20" height="15" viewBox="0 0 20 15"><path d="M16 8.1H10.4M12.6 5.6L10 8.1l2.6 2.5" fill="none" stroke="#cfcfcf" stroke-width="1.2" stroke-linecap="round"/></svg>
<div class="abs" style="left:959.7px;top:8px;width:5.8px;height:1.2px;background:#bdbdbd"></div>
<svg class="abs" style="left:984px;top:5px" width="7" height="7" viewBox="0 0 7 7"><rect x=".6" y="1.8" width="4.6" height="4.6" rx="0.8" fill="none" stroke="#bdbdbd" stroke-width="1.1"/><path d="M1.8 1.6V.6h4.6v4.6H5.3" fill="none" stroke="#bdbdbd" stroke-width="1"/></svg>
<svg class="abs" style="left:1008.4px;top:5.4px" width="7" height="7" viewBox="0 0 7 7"><path d="M.5 .5l5.8 5.8M6.3 .5l-5.8 5.8" stroke="#c4c4c4" stroke-width="1.1"/></svg>
<svg class="abs" style="left:3px;top:270px" width="10" height="15" viewBox="0 0 10 15"><path d="M8 1L1.5 7.3 8 13.8" fill="none" stroke="#aaa" stroke-width="1.2"/></svg>
<svg class="abs" style="left:1012px;top:270px" width="10" height="15" viewBox="0 0 10 15"><path d="M1.2 1l6.5 6.3-6.5 6.5" fill="none" stroke="#aaa" stroke-width="1.2"/></svg>
<div class="abs" style="left:12.5px;top:503.6px;width:940px;height:1.4px;background:#45ace4"></div>
<div class="abs" style="left:963px;top:503.8px;width:48px;height:1px;background:#333"></div>
<div class="abs" style="left:952.5px;top:499px;width:10.6px;height:10.6px;border-radius:50%;border:1.4px solid #45ace4;background:#000"></div>
<div class="t" id="time_l" style="left:12.9px;top:512.5px;font-size:7px;color:#e0e0e0;transform:scaleX(0.865);transform-origin:0 0;">0:04:57</div>
<div class="t" id="time_r" style="left:990.8px;top:512.7px;font-size:7px;color:#e0e0e0;transform:scaleX(0.878);transform-origin:0 0;">0:00:15</div>
<svg class="abs" style="left:20px;top:529px" width="13" height="10" viewBox="0 0 13 10"><path d="M1 3.5h2L6 .8v8.4L3 6.5H1z" fill="none" stroke="#ddd" stroke-width="0.9"/><path d="M8 3a2.5 2.5 0 0 1 0 4M9.5 1.8a4.2 4.2 0 0 1 0 6.4M11 .7a5.8 5.8 0 0 1 0 8.6" fill="none" stroke="#ddd" stroke-width="0.8"/></svg>
<svg class="abs" style="left:47px;top:529px" width="12" height="10" viewBox="0 0 12 10"><rect x=".5" y=".5" width="10.5" height="7" fill="none" stroke="#ddd" stroke-width="0.9"/><path d="M2 3h7.5M2 5h7.5" stroke="#ddd" stroke-width="0.8"/><path d="M2 7.5v2l2-2" fill="none" stroke="#ddd" stroke-width="0.8"/></svg>
<svg class="abs" style="left:478px;top:527px" width="15" height="8" viewBox="0 0 15 8"><path d="M3 5.2a5 4.2 0 0 1 9.5 0.8" fill="none" stroke="#f0f0f0" stroke-width="1.3"/><circle cx="2.6" cy="5.2" r="1.2" fill="#f0f0f0"/></svg>
<div class="t" style="left:482px;top:533.2px;font-size:6.6px;color:#f0f0f0;font-weight:bold">10</div>
<svg class="abs" style="left:508px;top:529px" width="9" height="10" viewBox="0 0 9 10"><path d="M1.6 1.2l6 3.8-6 3.8z" fill="none" stroke="#f0f0f0" stroke-width="1.2"/></svg>
<svg class="abs" style="left:532px;top:527px" width="15" height="8" viewBox="0 0 15 8"><path d="M2 6a5 4.2 0 0 1 9.5 -0.8" fill="none" stroke="#f0f0f0" stroke-width="1.3"/><circle cx="11.9" cy="5.2" r="1.2" fill="#f0f0f0"/></svg>
<div class="t" style="left:534.6px;top:533.2px;font-size:6.6px;color:#f0f0f0;font-weight:bold">30</div>
<svg class="abs" style="left:911px;top:528px" width="15" height="13" viewBox="0 0 15 13"><path d="M2 11.5l1-3.2 8-7.3a1.4 1.4 0 0 1 2 2l-8 7.3z M3 8.3l2 2.2" fill="none" stroke="#eee" stroke-width="0.9"/></svg>
<svg class="abs" style="left:939px;top:530px" width="12" height="9" viewBox="0 0 12 9"><rect x=".5" y=".5" width="10.5" height="7.3" fill="none" stroke="#ddd" stroke-width="0.9"/><rect x="4.5" y="3" width="5" height="3" fill="#ddd"/></svg>
<svg class="abs" style="left:965px;top:528px" width="12" height="12" viewBox="0 0 12 12"><path d="M1.5 10.5l9-9M1.5 6.5v4h4M6.5 1.5h4v4" fill="none" stroke="#ddd" stroke-width="0.9"/></svg>
<svg class="abs" style="left:990px;top:531px" width="16" height="6" viewBox="0 0 16 6"><circle cx="3.6" cy="3" r="0.85" fill="#ddd"/><circle cx="8" cy="3" r="0.85" fill="#ddd"/><circle cx="12.4" cy="3" r="0.85" fill="#ddd"/></svg>
</body></html>
